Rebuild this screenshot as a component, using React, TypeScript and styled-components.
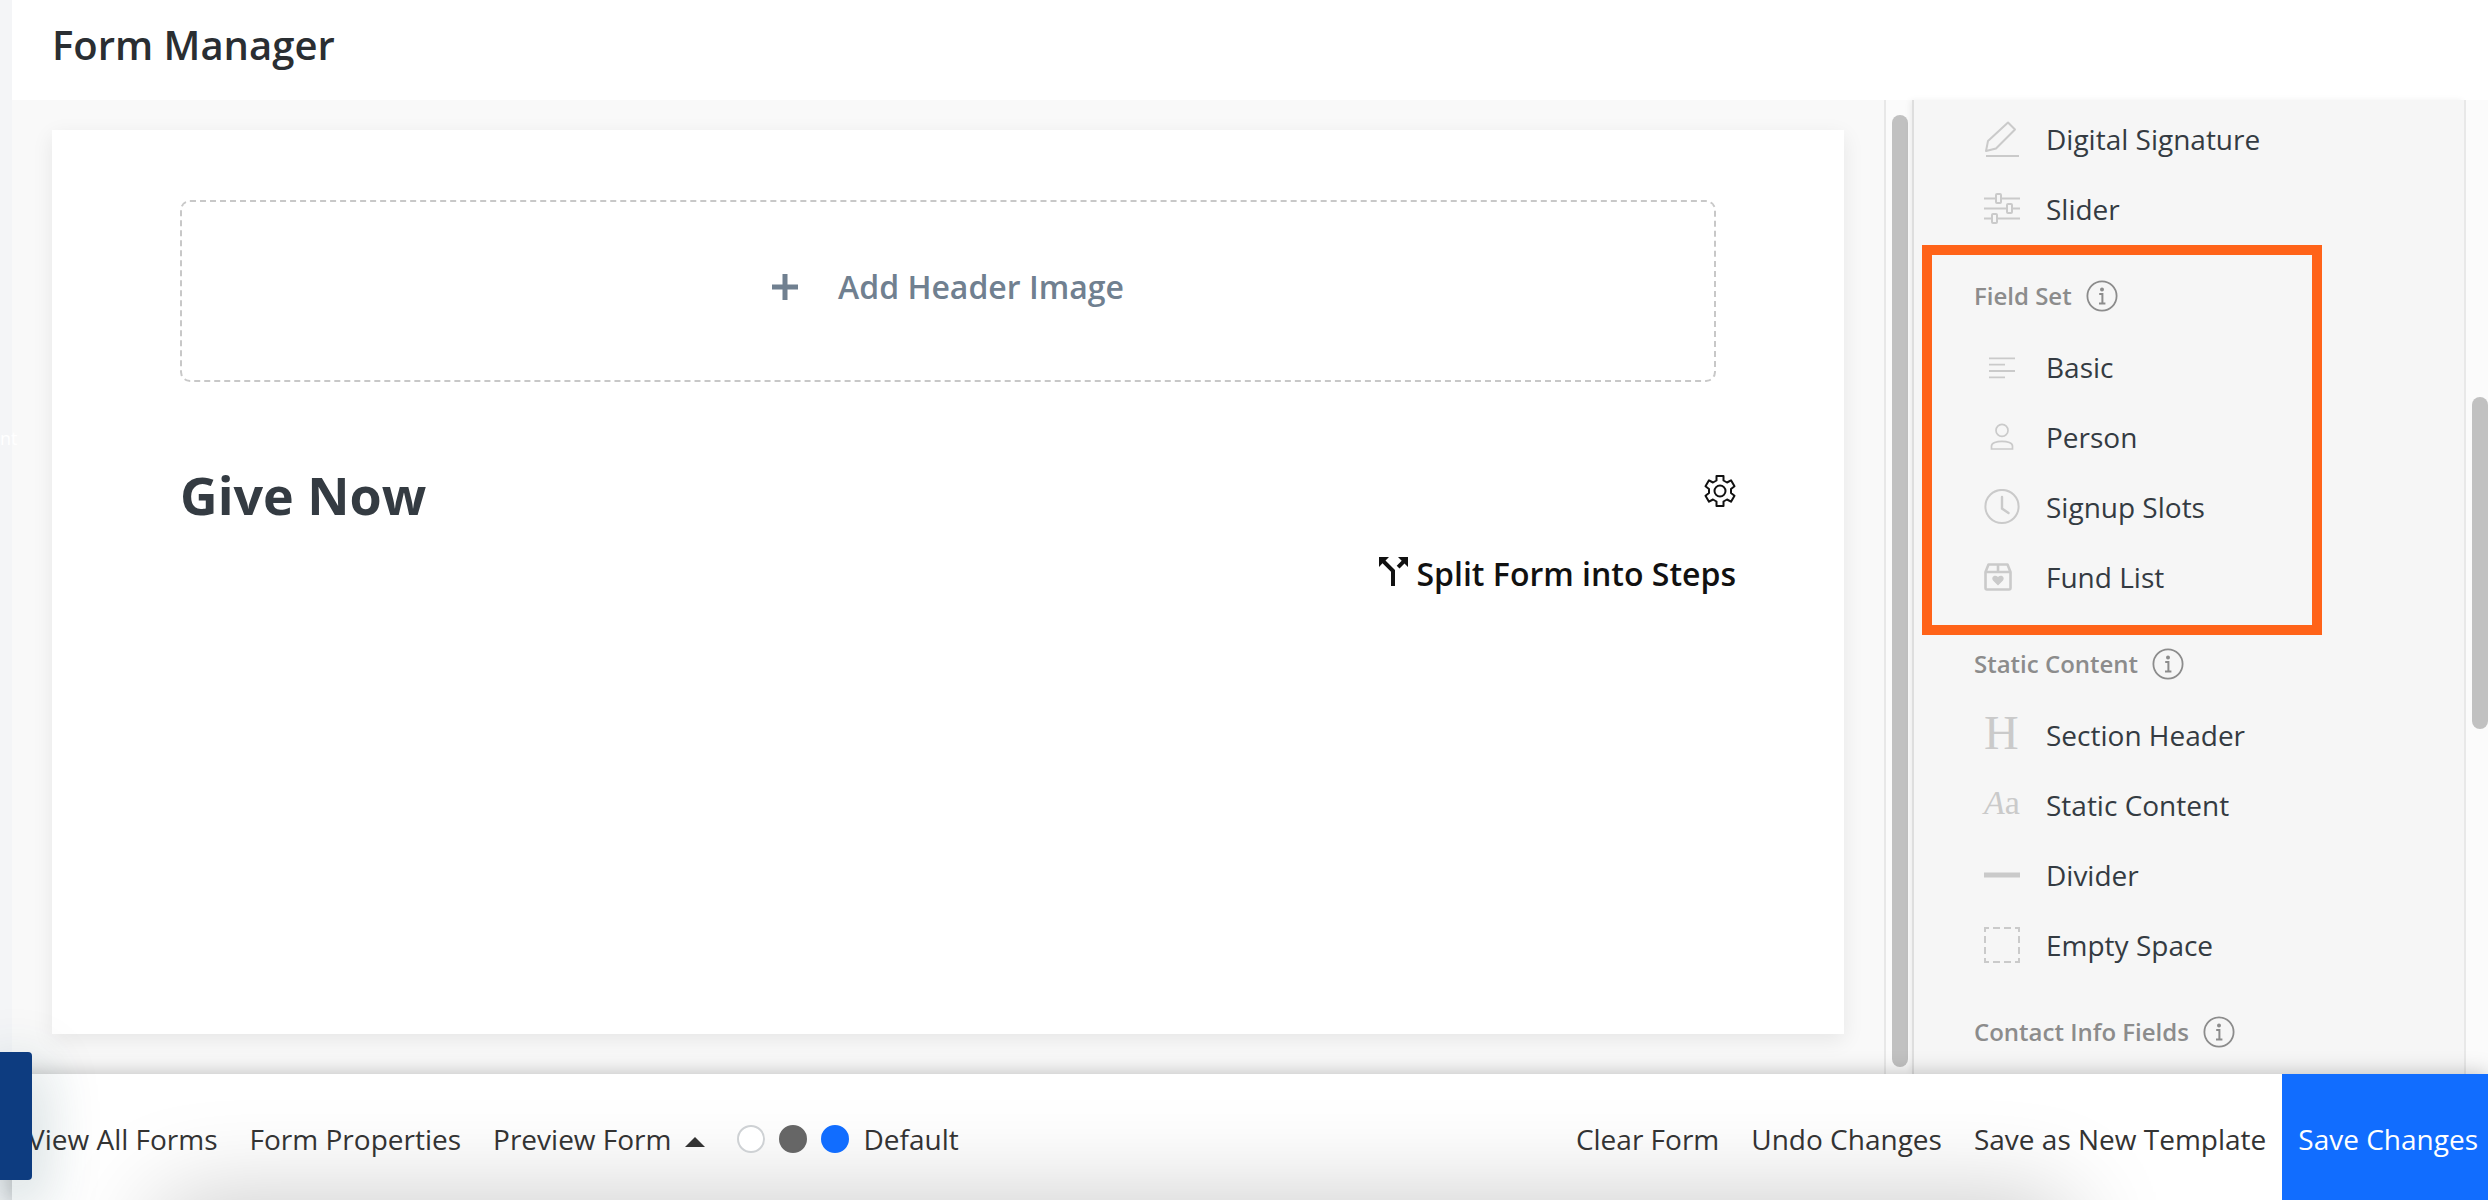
import React from 'react';
import styled, { createGlobalStyle, css } from 'styled-components';

const GlobalStyle = createGlobalStyle`
  *, *::before, *::after { box-sizing: border-box; }
  html, body { margin: 0; height: 100%; }
  body {
    font-family: "Open Sans", "Noto Sans", sans-serif;
    color: #343b42;
    background: #f4f5f7;
    overflow: hidden;
  }
  #root { height: 100%; }
  button { font: inherit; color: inherit; background: none; border: 0; padding: 0; cursor: pointer; }
  a { color: inherit; text-decoration: none; }
`;

const Shell = styled.div`
  position: relative;
  display: flex;
  height: 100vh;
  overflow: hidden;
`;

const NavEdge = styled.nav`
  position: relative;
  width: 12px;
  flex: none;
  background: #f4f5f7;
`;

const NavLabel = styled.span`
  position: absolute;
  z-index: 1;
  top: 422px;
  left: 0;
  font-size: 18px;
  line-height: 32px;
  color: #fff;
`;

const Main = styled.main`
  display: flex;
  flex-direction: column;
  flex: 1;
  min-width: 0;
`;

const Header = styled.header`
  padding: 18px 40px 28px;
  background: #fff;
`;

const PageTitle = styled.h1`
  margin: 0;
  font-size: 40px;
  line-height: 54px;
  font-weight: 600;
  color: #2a2e32;
`;

const Workspace = styled.div`
  display: flex;
  flex: 1;
  min-height: 0;
`;

const Canvas = styled.section`
  display: flex;
  flex: 1;
  min-width: 0;
  padding: 30px 40px 40px;
  background: #f9f9f9;
`;

const Paper = styled.div`
  flex: 1;
  padding: 70px 108px 70px 128px;
  background: #fff;
  box-shadow: 0 6px 20px rgba(0, 0, 0, 0.08);
`;

const HeaderImageButton = styled.button`
  && {
    display: flex;
    align-items: center;
    justify-content: center;
    gap: 40px;
    width: calc(100% - 20px);
    height: 182px;
    padding-bottom: 8px;
    border: 2px dashed #c8c8c8;
    border-radius: 10px;
    font-size: 32px;
    line-height: 44px;
    font-weight: 600;
    color: #708090;
  }
`;

const TitleRow = styled.div`
  display: flex;
  justify-content: space-between;
  align-items: center;
  margin-top: 78px;
`;

const FormTitle = styled.h2`
  margin: 0;
  font-size: 52px;
  line-height: 70px;
  font-weight: 700;
`;

const IconButton = styled.button`
  display: flex;
  margin-bottom: 8px;
`;

const StepsRow = styled.div`
  display: flex;
  justify-content: flex-end;
  margin-top: 22px;
`;

const StepsButton = styled.button`
  display: flex;
  align-items: center;
  gap: 8px;
  font-size: 32px;
  line-height: 44px;
  font-weight: 600;
  color: #111;
  svg { margin-bottom: 4px; }
`;

const Track = styled.div<{ $flush?: boolean }>`
  flex: none;
  width: ${(p) => (p.$flush ? 24 : 28)}px;
  padding: 15px 0 7px 6px;
  border-left: 2px solid #e8e8e8;
  background: #fbfbfb;
`;

const Thumb = styled.div<{ $offset?: number; $length?: number }>`
  width: 16px;
  margin-top: ${(p) => p.$offset ?? 0}px;
  height: ${(p) => (p.$length ? `${p.$length}px` : '100%')};
  border-radius: 8px;
  background: #c1c1c1;
`;

const Palette = styled.aside`
  flex: none;
  width: 552px;
  padding-top: 4px;
  border-left: 2px solid #dedede;
  background: #f6f6f6;
  box-shadow: -2px 0 6px rgba(0, 0, 0, 0.06);
  overflow: hidden;
`;

const Group = styled.section`
  position: relative;
`;

const GroupHeading = styled.h3`
  display: flex;
  align-items: center;
  gap: 14px;
  height: 88px;
  margin: 0;
  padding: 16px 0 0 60px;
  font-size: 24px;
  line-height: 34px;
  font-weight: 600;
  color: #8c8c8c;
`;

const FieldList = styled.ul`
  margin: 0;
  padding: 0;
  list-style: none;
`;

const FieldButton = styled.button`
  && {
    display: flex;
    align-items: center;
    gap: 26px;
    width: 100%;
    height: 70px;
    padding-left: 70px;
    font-size: 28px;
    line-height: 38px;
    text-align: left;
  }
  svg { color: #cacaca; }
`;

const Highlight = styled.div`
  position: absolute;
  top: 1px;
  bottom: -23px;
  left: 8px;
  width: 400px;
  border: 10px solid #ff6319;
  pointer-events: none;
`;

const Footer = styled.footer`
  position: relative;
  z-index: 2;
  display: flex;
  justify-content: space-between;
  flex: none;
  height: 126px;
  background: #fff;
  box-shadow: 0 0 20px rgba(0, 0, 0, 0.25);
  font-size: 28px;
  line-height: 38px;
  color: #333;
`;

const DockShade = styled.div`
  position: absolute;
  inset: 0;
  overflow: hidden;
  pointer-events: none;
  &::after {
    content: '';
    position: absolute;
    top: 100%;
    left: 6%;
    right: 17%;
    height: 200px;
    box-shadow: 0 0 100px rgba(0, 0, 0, 0.22);
  }
`;

const Actions = styled.div`
  position: relative;
  display: flex;
  align-items: stretch;
`;

const actionBase = css`
  display: flex;
  align-items: center;
  padding: 4px 16px 0;
`;

const ActionLink = styled.a`
  ${actionBase}
`;

const ActionButton = styled.button<{ $primary?: boolean }>`
  && {
    ${actionBase}
    gap: 14px;
    ${(p) => p.$primary && css`
      padding-right: 10px;
      background: #116dff;
      color: #fff;
    `}
  }
`;

const Caret = styled.span`
  width: 0;
  height: 0;
  margin-top: 6px;
  border: 10px solid transparent;
  border-top: 0;
  border-bottom: 10px solid #333;
`;

const Theme = styled.fieldset`
  display: flex;
  align-items: center;
  gap: 14px;
  margin: 0;
  padding: 4px 16px 0;
  border: 0;
`;

const Swatch = styled.input<{ $fill: string; $line: string }>`
  appearance: none;
  width: 28px;
  height: 28px;
  margin: 0;
  border: 2px solid ${(p) => p.$line};
  border-radius: 50%;
  background: ${(p) => p.$fill};
`;

const SideTab = styled.button`
  && {
    position: absolute;
    z-index: 3;
    left: 0;
    bottom: 20px;
    width: 32px;
    height: 128px;
    border-radius: 0 4px 4px 0;
    background: #0d3c80;
    box-shadow: 0 20px 60px 10px rgba(20, 70, 80, 0.2);
  }
`;

const Icon = ({ children, w = 36, h = 36 }: { children: React.ReactNode; w?: number; h?: number }) => (
  <svg width={w} height={h} viewBox={`0 0 ${w} ${h}`} fill="none" stroke="currentColor" strokeWidth={2} aria-hidden="true">
    {children}
  </svg>
);

const InfoIcon = () => (
  <Icon w={32} h={32}>
    <circle cx="16" cy="16" r="14.6" strokeWidth="1.8" />
    <circle cx="16" cy="9.5" r="2" fill="currentColor" stroke="none" />
    <path d="M13.200 14h3.200v9.600M13 23.600h6.400" strokeWidth="2" />
  </Icon>
);

const Letters = styled.span<{ $size: number }>`
  width: 36px;
  padding-bottom: 4px;
  font-family: "Liberation Serif", serif;
  font-size: ${(p) => p.$size}px;
  line-height: 36px;
  color: #cacaca;
`;

const icons = {
  signature: (
    <Icon>
      <path d="M2 30 L4 20 L24 1.500 L31 8.500 L12 27.500 Z" strokeLinejoin="round" />
      <path d="M2 35h33" />
    </Icon>
  ),
  slider: (
    <Icon>
      <path d="M0 7.500h12M17 7.500h19M0 17.500h23M28 17.500h8M0 27.500h8M13 27.500h23" />
      <rect x="12" y="3" width="5" height="9" rx="1" />
      <rect x="23" y="13" width="5" height="9" rx="1" />
      <rect x="8" y="23" width="5" height="9" rx="1" />
    </Icon>
  ),
  basic: (
    <Icon>
      <path d="M5 9.300h26M5 15.600h16M5 22h26M5 28.300h16" strokeWidth="1.800" />
    </Icon>
  ),
  person: (
    <Icon>
      <circle cx="18" cy="11.400" r="6" strokeWidth="1.700" />
      <path d="M7.500 30v-3c0-3 5-4.700 10.500-4.700s10.500 1.700 10.500 4.700v3z" strokeWidth="1.700" />
    </Icon>
  ),
  clock: (
    <Icon>
      <circle cx="18" cy="17.500" r="16.600" />
      <path d="M18 8v11.500l6.500 4.500" strokeWidth="2.400" strokeLinecap="round" />
    </Icon>
  ),
  fund: (
    <Icon>
      <path d="M1.500 13v16q0 1.500 1.500 1.500h22q1.500 0 1.500-1.500V13L23.500 5.500h-19zM1.500 13h25M14 5.500v7.500" strokeWidth="2.600" strokeLinejoin="round" />
      <path d="M14 26.500l-5-5c-2.500-3.500 2-6.500 5-3.500c3-3 7.500 0 5 3.500z" fill="currentColor" stroke="none" />
    </Icon>
  ),
  heading: <Letters $size={48} aria-hidden="true">H</Letters>,
  text: <Letters $size={34} aria-hidden="true"><i>A</i>a</Letters>,
  divider: (
    <Icon>
      <path d="M0 18h36" strokeWidth="5" />
    </Icon>
  ),
  empty: (
    <Icon>
      <path d="M1 5V1h4M9 1h7M20 1h7M31 1h4v4M35 9v7M35 20v7M35 31v4h-4M27 35h-7M16 35H9M5 35H1v-4M1 27v-7M1 16V9" />
    </Icon>
  ),
};

type Field = { label: string; icon: React.ReactNode };
type FieldGroup = { title?: string; highlighted?: boolean; fields: Field[] };

const groups: FieldGroup[] = [
  {
    fields: [
      { label: 'Digital Signature', icon: icons.signature },
      { label: 'Slider', icon: icons.slider },
    ],
  },
  {
    title: 'Field Set',
    highlighted: true,
    fields: [
      { label: 'Basic', icon: icons.basic },
      { label: 'Person', icon: icons.person },
      { label: 'Signup Slots', icon: icons.clock },
      { label: 'Fund List', icon: icons.fund },
    ],
  },
  {
    title: 'Static Content',
    fields: [
      { label: 'Section Header', icon: icons.heading },
      { label: 'Static Content', icon: icons.text },
      { label: 'Divider', icon: icons.divider },
      { label: 'Empty Space', icon: icons.empty },
    ],
  },
  { title: 'Contact Info Fields', fields: [] },
];

export default function App() {
  return (
    <>
      <GlobalStyle />
      <Shell>
        <NavEdge>
          <NavLabel>nt</NavLabel>
        </NavEdge>
        <Main>
          <Header>
            <PageTitle>Form Manager</PageTitle>
          </Header>
          <Workspace>
            <Canvas>
              <Paper>
                <HeaderImageButton type="button">
                  <Icon w={26} h={26}>
                    <path d="M13 0v26M0 13h26" strokeWidth="5" />
                  </Icon>
                  Add Header Image
                </HeaderImageButton>
                <TitleRow>
                  <FormTitle>Give Now</FormTitle>
                  <IconButton type="button" aria-label="Form settings">
                    <svg width="32" height="32" viewBox="0 0 32 32" fill="none" stroke="#111" strokeWidth="2" strokeLinejoin="round">
                      <path d="M12.500 1h7v4.500l3.500 2 4-2.200 3.500 6-3.500 2.700v4l3.500 2.700-3.500 6-4-2.200-3.500 2V31h-7v-4.500l-3.500-2-4 2.200-3.500-6L5 18v-4l-3.500-2.700 3.500-6 4 2.200 3.500-2z" />
                      <circle cx="16" cy="16" r="5.500" />
                    </svg>
                  </IconButton>
                </TitleRow>
                <StepsRow>
                  <StepsButton type="button">
                    <svg width="32" height="32" viewBox="0 0 32 32" fill="#111" aria-hidden="true">
                      <path d="M2 1h10L8.500 4.500l9.500 9.500V30h-4V15.700L5.500 7.300 2 11zM21 1h10v10l-3.500-3.500-5 5-2.800-2.800 5-5z" />
                    </svg>
                    Split Form into Steps
                  </StepsButton>
                </StepsRow>
              </Paper>
            </Canvas>
            <Track>
              <Thumb />
            </Track>
            <Palette>
              {groups.map((group, index) => (
                <Group key={index}>
                  {group.title && (
                    <GroupHeading>
                      {group.title}
                      <InfoIcon />
                    </GroupHeading>
                  )}
                  <FieldList>
                    {group.fields.map((field) => (
                      <li key={field.label}>
                        <FieldButton type="button">
                          {field.icon}
                          {field.label}
                        </FieldButton>
                      </li>
                    ))}
                  </FieldList>
                  {group.highlighted && <Highlight />}
                </Group>
              ))}
            </Palette>
            <Track $flush>
              <Thumb $offset={282} $length={332} />
            </Track>
          </Workspace>
          <Footer>
            <DockShade />
            <Actions>
              <ActionLink href="#forms">View All Forms</ActionLink>
              <ActionButton type="button">Form Properties</ActionButton>
              <ActionButton type="button">
                Preview Form
                <Caret />
              </ActionButton>
              <Theme aria-label="Theme">
                <Swatch type="radio" name="theme" aria-label="White" $fill="#fff" $line="#ced1d4" />
                <Swatch type="radio" name="theme" aria-label="Gray" $fill="#666" $line="#666" />
                <Swatch type="radio" name="theme" aria-label="Blue" $fill="#116dff" $line="#116dff" />
                Default
              </Theme>
            </Actions>
            <Actions>
              <ActionButton type="button">Clear Form</ActionButton>
              <ActionButton type="button">Undo Changes</ActionButton>
              <ActionButton type="button">Save as New Template</ActionButton>
              <ActionButton type="button" $primary>Save Changes</ActionButton>
            </Actions>
          </Footer>
        </Main>
        <SideTab type="button" aria-label="Help" />
      </Shell>
    </>
  );
}
